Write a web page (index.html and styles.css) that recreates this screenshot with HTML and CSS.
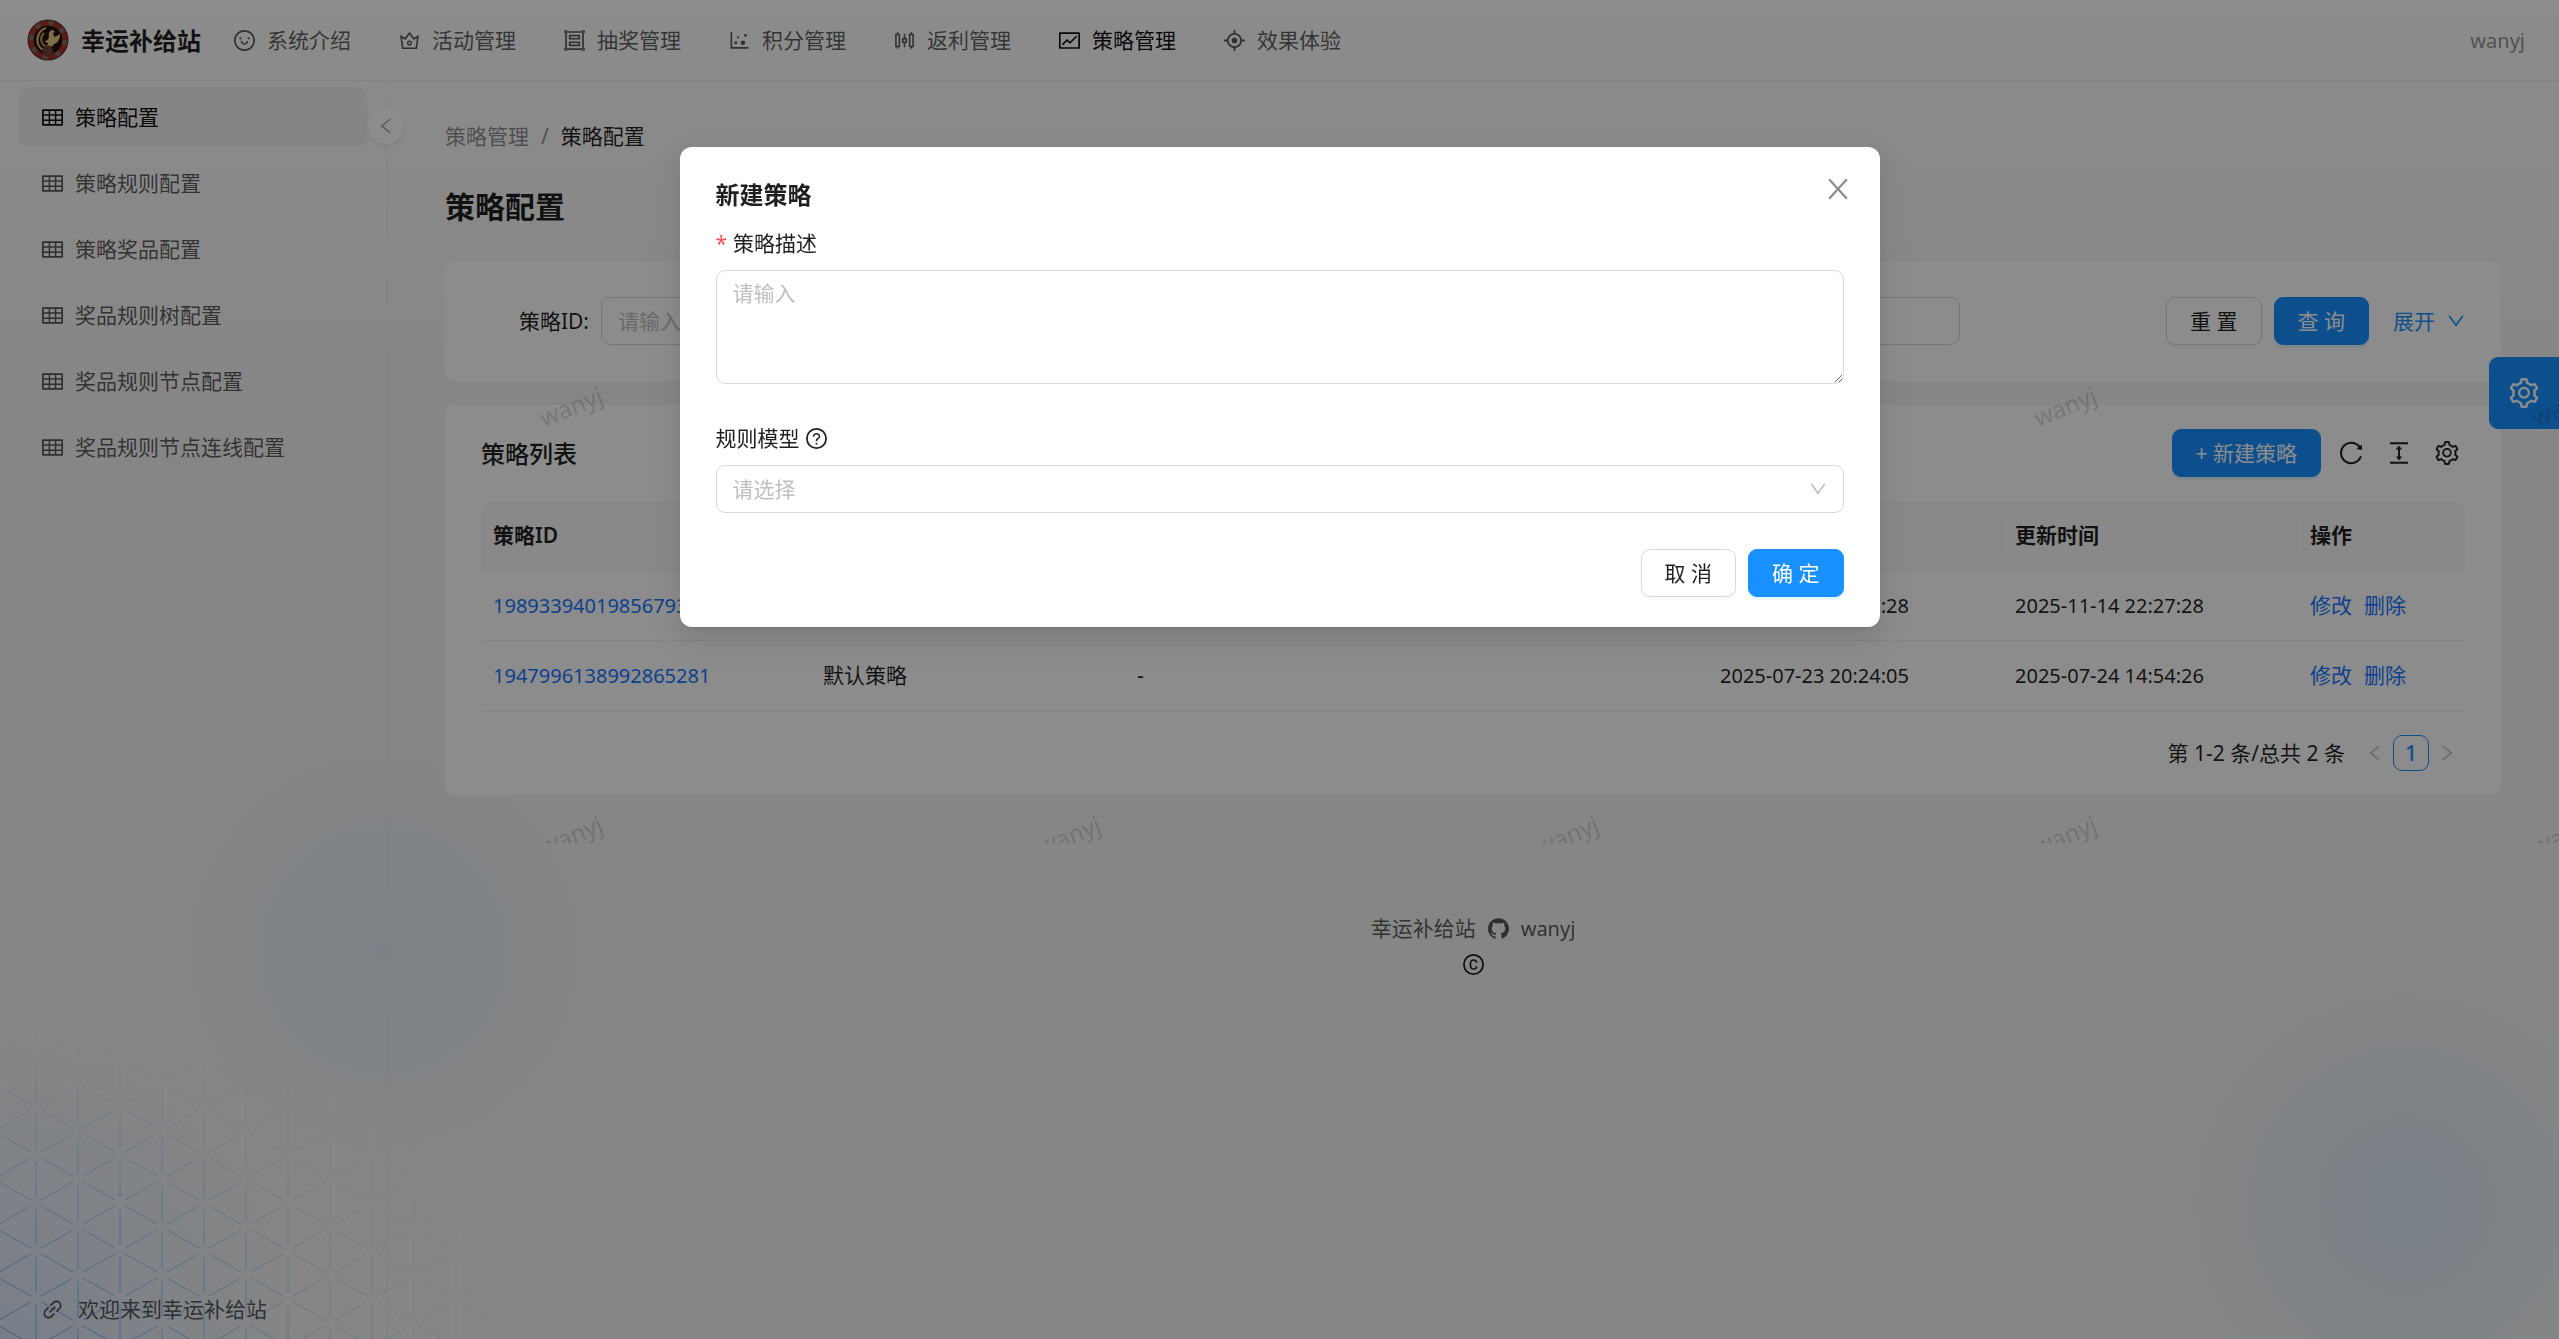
FILE: index.html
```html
<!DOCTYPE html>
<html lang="zh-CN">
<head>
    <meta charset="UTF-8">
    <meta name="viewport" content="width=device-width, initial-scale=1.0">
    <title>策略配置 - 幸运补给站</title>
    <link rel="stylesheet" href="styles.css">
</head>
<body>
    <!-- 图标库 -->
    <svg class="sprite" aria-hidden="true">
        <symbol id="i-smile" viewBox="64 64 896 896"><path d="M288 421a48 48 0 1096 0 48 48 0 10-96 0zm352 0a48 48 0 1096 0 48 48 0 10-96 0zM512 64C264.6 64 64 264.6 64 512s200.6 448 448 448 448-200.6 448-448S759.4 64 512 64zm263 711c-34.2 34.2-74 61-118.3 79.8C611 874.2 562.3 884 512 884c-50.3 0-99-9.8-144.8-29.2A370.4 370.4 0 01248.9 775c-34.2-34.2-61-74-79.8-118.3C149.8 611 140 562.3 140 512s9.8-99 29.2-144.8A370.4 370.4 0 01249 248.9c34.2-34.2 74-61 118.3-79.8C413 149.8 461.7 140 512 140c50.3 0 99 9.8 144.8 29.2A370.4 370.4 0 01775.1 249c34.2 34.2 61 74 79.8 118.3C874.2 413 884 461.7 884 512s-9.8 99-29.2 144.8A368.89 368.89 0 01775 775zM664 533h-48.1c-4.2 0-7.8 3.2-8.1 7.4C604 589.9 562.5 629 512 629s-92.1-39.1-95.8-88.6c-.3-4.2-3.9-7.4-8.1-7.4H360a8 8 0 00-8 8.4c4.4 84.3 74.5 151.6 160 151.6s155.6-67.3 160-151.6a8 8 0 00-8-8.4z"/></symbol>
        <symbol id="i-crown" viewBox="64 64 896 896"><path d="M899.6 276.5L705 396.4 518.4 147.5a8.06 8.06 0 00-12.9 0L319 396.4 124.3 276.5c-5.7-3.5-13.1 1.2-12.2 7.9L188.5 865c1.1 7.9 7.9 14 16 14h615.1c8 0 14.9-6 15.9-14l76.4-580.6c.8-6.7-6.5-11.4-12.3-7.9zm-126 534.1H250.3l-53.8-409.4 139.8 86.1L512 252.9l175.7 234.4 139.8-86.1-53.9 409.4zM512 509c-62.1 0-112.6 50.5-112.6 112.6S449.9 734.2 512 734.2s112.6-50.5 112.6-112.6S574.1 509 512 509zm0 160.9c-26.6 0-48.2-21.6-48.2-48.3 0-26.6 21.6-48.3 48.2-48.3s48.2 21.6 48.2 48.3c0 26.6-21.6 48.3-48.2 48.3z"/></symbol>
        <symbol id="i-group" viewBox="64 64 896 896"><path d="M912 820.1V203.9c28-9.9 48-36.6 48-67.9 0-39.8-32.2-72-72-72-31.3 0-58 20-67.9 48H203.9C194 84 167.3 64 136 64c-39.8 0-72 32.2-72 72 0 31.3 20 58 48 67.9v616.2C84 830 64 856.7 64 888c0 39.8 32.2 72 72 72 31.3 0 58-20 67.9-48h616.2c9.9 28 36.6 48 67.9 48 39.8 0 72-32.2 72-72 0-31.3-20-58-48-67.9zM888 112c13.3 0 24 10.7 24 24s-10.7 24-24 24-24-10.7-24-24 10.7-24 24-24zM136 912c-13.3 0-24-10.7-24-24s10.7-24 24-24 24 10.7 24 24-10.7 24-24 24zm0-752c-13.3 0-24-10.7-24-24s10.7-24 24-24 24 10.7 24 24-10.7 24-24 24zm704 680H184V184h656v656zm48 72c-13.3 0-24-10.7-24-24s10.7-24 24-24 24 10.7 24 24-10.7 24-24 24z"/><path d="M288 474h448c8.8 0 16-7.2 16-16V282c0-8.8-7.2-16-16-16H288c-8.8 0-16 7.2-16 16v176c0 8.8 7.2 16 16 16zm56-136h336v64H344v-64zm-56 420h448c8.8 0 16-7.2 16-16V566c0-8.8-7.2-16-16-16H288c-8.8 0-16 7.2-16 16v176c0 8.8 7.2 16 16 16zm56-136h336v64H344v-64z"/></symbol>
        <symbol id="i-dot" viewBox="64 64 896 896"><path d="M888 792H200V168c0-4.4-3.6-8-8-8h-56c-4.4 0-8 3.6-8 8v688c0 4.4 3.6 8 8 8h752c4.4 0 8-3.6 8-8v-56c0-4.4-3.6-8-8-8zM288 604a64 64 0 10128 0 64 64 0 10-128 0zm118-224a48 48 0 1096 0 48 48 0 10-96 0zm158 228a96 96 0 10192 0 96 96 0 10-192 0zm148-314a56 56 0 10112 0 56 56 0 10-112 0z"/></symbol>
        <symbol id="i-sliders" viewBox="64 64 896 896"><path d="M320 224h-66v-56c0-4.4-3.6-8-8-8h-52c-4.4 0-8 3.6-8 8v56h-66c-4.4 0-8 3.6-8 8v560c0 4.4 3.6 8 8 8h66v56c0 4.4 3.6 8 8 8h52c4.4 0 8-3.6 8-8v-56h66c4.4 0 8-3.6 8-8V232c0-4.4-3.6-8-8-8zm-60 508h-80V292h80v440zm644-508h-66v-56c0-4.4-3.6-8-8-8h-52c-4.4 0-8 3.6-8 8v56h-66c-4.4 0-8 3.6-8 8v560c0 4.4 3.6 8 8 8h66v56c0 4.4 3.6 8 8 8h52c4.4 0 8-3.6 8-8v-56h66c4.4 0 8-3.6 8-8V232c0-4.4-3.6-8-8-8zm-60 508h-80V292h80v440zM612 404h-66V232c0-4.4-3.6-8-8-8h-52c-4.4 0-8 3.6-8 8v172h-66c-4.4 0-8 3.6-8 8v200c0 4.4 3.6 8 8 8h66v172c0 4.4 3.6 8 8 8h52c4.4 0 8-3.6 8-8V620h66c4.4 0 8-3.6 8-8V412c0-4.4-3.6-8-8-8zm-60 145a3 3 0 01-3 3h-74a3 3 0 01-3-3v-74a3 3 0 013-3h74a3 3 0 013 3v74z"/></symbol>
        <symbol id="i-fund" viewBox="64 64 896 896"><path d="M926 164H94c-17.7 0-32 14.3-32 32v640c0 17.7 14.3 32 32 32h832c17.7 0 32-14.3 32-32V196c0-17.7-14.3-32-32-32zm-40 632H134V236h752v560zm-658.9-82.3c3.1 3.1 8.2 3.1 11.3 0l172.5-172.5 114.4 114.5c3.1 3.1 8.2 3.1 11.3 0l297-297.2c3.1-3.1 3.1-8.2 0-11.3l-36.8-36.8a8.03 8.03 0 00-11.3 0L531 565 416.6 450.5a8.03 8.03 0 00-11.3 0l-214.9 215a8.03 8.03 0 000 11.3l36.7 36.9z"/></symbol>
        <symbol id="i-aim" viewBox="64 64 896 896"><path d="M952 474H829.8C812.5 327.6 696.4 211.5 550 194.2V72c0-4.4-3.6-8-8-8h-60c-4.4 0-8 3.6-8 8v122.2C327.6 211.5 211.5 327.6 194.2 474H72c-4.4 0-8 3.6-8 8v60c0 4.4 3.6 8 8 8h122.2C211.5 696.4 327.6 812.5 474 829.8V952c0 4.4 3.6 8 8 8h60c4.4 0 8-3.6 8-8V829.8C696.4 812.5 812.5 696.4 829.8 550H952c4.4 0 8-3.6 8-8v-60c0-4.4-3.6-8-8-8zM512 756c-134.8 0-244-109.2-244-244s109.2-244 244-244 244 109.2 244 244-109.2 244-244 244z"/><circle cx="512" cy="512" r="120"/></symbol>
        <symbol id="i-table" viewBox="64 64 896 896"><path d="M928 160H96c-17.7 0-32 14.3-32 32v640c0 17.7 14.3 32 32 32h832c17.7 0 32-14.3 32-32V192c0-17.7-14.3-32-32-32zm-40 208H676V232h212v136zm0 224H676V432h212v160zM412 432h200v160H412V432zm200-64H412V232h200v136zm-476 64h212v160H136V432zm0-200h212v136H136V232zm0 424h212v136H136V656zm276 0h200v136H412V656zm476 136H676V656h212v136z"/></symbol>
        <symbol id="i-left" viewBox="64 64 896 896"><path d="M724 218.3V141c0-6.7-7.7-10.4-12.9-6.3L260.3 486.8a31.86 31.86 0 000 50.3l450.8 352.1c5.3 4.1 12.9.4 12.9-6.3v-77.3c0-4.9-2.3-9.6-6.1-12.6l-360-281 360-281.1c3.8-3 6.1-7.7 6.1-12.6z"/></symbol>
        <symbol id="i-down" viewBox="64 64 896 896"><path d="M884 256h-75c-5.1 0-9.9 2.5-12.9 6.6L512 654.2 227.9 262.6c-3-4.1-7.8-6.6-12.9-6.6h-75c-6.5 0-10.3 7.4-6.5 12.7l352.6 486.1c12.8 17.6 39 17.6 51.7 0l352.6-486.1c3.9-5.3.1-12.7-6.4-12.7z"/></symbol>
        <symbol id="i-close" viewBox="64 64 896 896"><path d="M180 150L844 874M844 150L180 874" fill="none" stroke="currentColor" stroke-width="84"/></symbol>
        <symbol id="i-reload" viewBox="64 64 896 896"><path d="M909.1 209.3l-56.4 44.1C775.8 155.1 656.2 92 521.9 92 290 92 102.3 279.5 102 511.5 101.7 743.7 289.8 932 521.9 932c181.3 0 335.8-115 394.6-276.1 1.5-4.2-.7-8.9-4.9-10.3l-56.7-19.5a8 8 0 00-10.1 4.8c-1.8 5-3.8 10-5.9 14.9-17.3 41-42.1 77.8-73.7 109.4A344.77 344.77 0 01655.9 829c-42.3 17.9-87.4 27-133.8 27-46.5 0-91.5-9.1-133.8-27A341.5 341.5 0 01279 755.2a342.16 342.16 0 01-73.7-109.4c-17.9-42.4-27-87.4-27-133.9s9.1-91.5 27-133.9c17.3-41 42.1-77.8 73.7-109.4 31.6-31.6 68.4-56.4 109.3-73.8 42.3-17.9 87.4-27 133.8-27 46.5 0 91.5 9.1 133.8 27a341.5 341.5 0 01109.3 73.8c9.9 9.9 19.2 20.4 27.8 31.4l-60.2 47a8 8 0 003 14.1l175.6 43c5 1.2 9.9-2.6 9.9-7.7l.8-180.9c-.1-6.6-7.8-10.3-13-6.2z"/></symbol>
        <symbol id="i-height" viewBox="64 64 896 896"><path d="M840 836H184c-4.4 0-8 3.6-8 8v60c0 4.4 3.6 8 8 8h656c4.4 0 8-3.6 8-8v-60c0-4.4-3.6-8-8-8zm0-724H184c-4.4 0-8 3.6-8 8v60c0 4.4 3.6 8 8 8h656c4.4 0 8-3.6 8-8v-60c0-4.4-3.6-8-8-8zM610.8 378c6 0 9.4-7 5.7-11.7L515.7 238.7a7.14 7.14 0 00-11.3 0L403.6 366.3a7.23 7.23 0 005.7 11.7H476v268h-62.8c-6 0-9.4 7-5.7 11.7l100.8 127.5c2.9 3.7 8.5 3.7 11.3 0l100.8-127.5c3.7-4.7.4-11.7-5.7-11.7H548V378h62.8z"/></symbol>
        <symbol id="i-setting" viewBox="64 64 896 896"><path d="M924.8 625.7l-65.5-56c3.1-19 4.7-38.4 4.7-57.8s-1.6-38.8-4.7-57.8l65.5-56a32.03 32.03 0 009.3-35.2l-.9-2.6a443.74 443.74 0 00-79.7-137.9l-1.8-2.1a32.12 32.12 0 00-35.1-9.5l-81.3 28.9c-30-24.6-63.5-44-99.7-57.6l-15.7-85a32.05 32.05 0 00-25.8-25.7l-2.7-.5c-52.1-9.4-106.9-9.4-159 0l-2.7.5a32.05 32.05 0 00-25.8 25.7l-15.8 85.4a351.86 351.86 0 00-99 57.4l-81.9-29.1a32 32 0 00-35.1 9.5l-1.8 2.1a446.02 446.02 0 00-79.7 137.9l-.9 2.6c-4.5 12.5-.8 26.5 9.3 35.2l66.3 56.6c-3.1 18.8-4.6 38-4.6 57.1 0 19.2 1.5 38.4 4.6 57.1L99 625.5a32.03 32.03 0 00-9.3 35.2l.9 2.6c18.1 50.4 44.9 96.9 79.7 137.9l1.8 2.1a32.12 32.12 0 0035.1 9.5l81.9-29.1c29.8 24.5 63.1 43.9 99 57.4l15.8 85.4a32.05 32.05 0 0025.8 25.7l2.7.5a449.4 449.4 0 00159 0l2.7-.5a32.05 32.05 0 0025.8-25.7l15.7-85a350 350 0 0099.7-57.6l81.3 28.9a32 32 0 0035.1-9.5l1.8-2.1c34.8-41.1 61.6-87.5 79.7-137.9l.9-2.6c4.5-12.3.8-26.3-9.3-35zM788.3 465.9c2.5 15.1 3.8 30.6 3.8 46.1s-1.3 31-3.8 46.1l-6.6 40.1 74.7 63.9a370.03 370.03 0 01-42.6 73.6L721 702.8l-31.4 25.8c-23.9 19.6-50.5 35-79.3 45.8l-38.1 14.3-17.9 97a377.5 377.5 0 01-85 0l-17.9-97.2-37.8-14.5c-28.5-10.8-55-26.2-78.7-45.7l-31.4-25.9-93.4 33.2c-17-22.9-31.2-47.6-42.6-73.6l75.5-64.5-6.5-40c-2.4-14.9-3.7-30.3-3.7-45.5 0-15.3 1.2-30.6 3.7-45.5l6.5-40-75.5-64.5c11.3-26.1 25.6-50.7 42.6-73.6l93.4 33.2 31.4-25.9c23.7-19.5 50.2-34.9 78.7-45.7l37.9-14.3 17.9-97.2c28.1-3.2 56.8-3.2 85 0l17.9 97 38.1 14.3c28.7 10.8 55.4 26.2 79.3 45.8l31.4 25.8 92.8-32.9c17 22.9 31.2 47.6 42.6 73.6L781.8 426l6.5 39.9zM512 326c-97.2 0-176 78.8-176 176s78.8 176 176 176 176-78.8 176-176-78.8-176-176-176zm79.2 255.2A111.6 111.6 0 01512 614c-29.9 0-58-11.7-79.2-32.8A111.6 111.6 0 01400 502c0-29.9 11.7-58 32.8-79.2C454 401.6 482.1 390 512 390c29.9 0 58 11.6 79.2 32.8A111.6 111.6 0 01624 502c0 29.9-11.7 58-32.8 79.2z"/></symbol>
        <symbol id="i-github" viewBox="64 64 896 896"><path d="M511.6 76.3C264.3 76.2 64 276.4 64 523.5 64 718.9 189.3 885 363.8 946c23.5 5.9 19.9-10.8 19.9-22.2v-77.5c-135.7 15.9-141.2-73.9-150.3-88.9C215 726 171.5 718 184.5 703c30.9-15.9 62.4 4 98.9 57.9 26.4 39.1 77.9 32.5 104 26 5.7-23.5 17.9-44.5 34.7-60.8-140.6-25.2-199.2-111-199.2-213 0-49.5 16.3-95 48.3-131.7-20.4-60.5 1.9-112.3 4.9-120 58.1-5.2 118.5 41.6 123.2 45.3 33-8.9 70.7-13.6 112.9-13.6 42.4 0 80.2 4.9 113.5 13.9 11.3-8.6 67.3-48.8 121.3-43.9 2.9 7.7 24.7 58.3 5.5 118 32.4 36.8 48.9 82.7 48.9 132.3 0 102.2-59 188.1-200 212.9a127.5 127.5 0 0138.1 91v112.5c.8 9 0 17.9 15 17.9 177.1-59.7 304.6-227 304.6-424.1 0-247.2-200.4-447.3-447.5-447.3z"/></symbol>
        <symbol id="i-question" viewBox="64 64 896 896"><circle cx="512" cy="512" r="410" fill="none" stroke="currentColor" stroke-width="76"/><path d="M623.6 316.7C593.6 290.4 554 276 512 276s-81.6 14.5-111.6 40.7C369.2 344 352 380.7 352 420v7.6c0 4.4 3.6 8 8 8h48c4.4 0 8-3.6 8-8V420c0-44.1 43.1-80 96-80s96 35.9 96 80c0 31.1-22 59.6-56.1 72.7-21.2 8.1-39.2 22.3-52.1 40.9-13.1 19-19.9 41.8-19.9 64.9V620c0 4.4 3.6 8 8 8h48c4.4 0 8-3.6 8-8v-22.7a48.3 48.3 0 0130.9-44.8c59-22.7 97.1-74.7 97.1-132.5.1-39.3-17.1-76-48.3-103.3zM472 732a40 40 0 1080 0 40 40 0 10-80 0z"/></symbol>
        <symbol id="i-copyright" viewBox="64 64 896 896"><circle cx="512" cy="512" r="410" fill="none" stroke="currentColor" stroke-width="76"/><path d="M517.6 351.3c53 0 89 33.8 93 83.4.3 4.2 3.8 7.4 8 7.4h56.7c2.6 0 4.7-2.1 4.7-4.7 0-86.7-68.4-147.4-162.7-147.4C407.4 290 344 364.2 344 486.8v52.3C344 660.8 407.4 734 517.3 734c94 0 162.7-58.8 162.7-141.4 0-2.6-2.1-4.7-4.7-4.7h-56.8c-4.2 0-7.6 3.2-8 7.3-4.2 46.1-40.1 77.8-93 77.8-65.3 0-102.1-47.9-102.1-133.6v-52.6c.1-87 37-135.5 102.2-135.5z"/></symbol>
        <symbol id="i-link" viewBox="64 64 896 896"><path d="M574 665.4a8.03 8.03 0 00-11.3 0L446.5 781.6c-53.8 53.8-144.6 59.5-204 0-59.5-59.5-53.8-150.2 0-204l116.2-116.2c3.1-3.1 3.1-8.2 0-11.3l-39.8-39.8a8.03 8.03 0 00-11.3 0L191.4 526.5c-84.6 84.6-84.6 221.5 0 306s221.5 84.6 306 0l116.2-116.2c3.1-3.1 3.1-8.2 0-11.3L574 665.4zm258.6-474c-84.6-84.6-221.5-84.6-306 0L410.3 307.6a8.03 8.03 0 000 11.3l39.7 39.7c3.1 3.1 8.2 3.1 11.3 0l116.2-116.2c53.8-53.8 144.6-59.5 204 0 59.5 59.5 53.8 150.2 0 204L665.3 562.6a8.03 8.03 0 000 11.3l39.8 39.8c3.1 3.1 8.2 3.1 11.3 0l116.2-116.2c84.5-84.6 84.5-221.5 0-306.1zM610.1 372.3a8.03 8.03 0 00-11.3 0L372.3 598.7a8.03 8.03 0 000 11.3l39.6 39.6c3.1 3.1 8.2 3.1 11.3 0l226.4-226.4c3.1-3.1 3.1-8.2 0-11.3l-39.5-39.6z"/></symbol>
    </svg>

    <div class="layout">
        <!-- 背景光斑和三角网格 -->
        <div class="layout-bg" aria-hidden="true">
            <svg class="bg-grid" viewBox="0 0 500 340">
                <defs>
                    <pattern id="tri" width="84" height="48" patternUnits="userSpaceOnUse" patternTransform="translate(15 12)">
                        <path d="M21 6V42M63 0V18M63 30V48M26 3L58 21M26 45L58 27M68 21L84 12M0 12L16 3M68 27L84 36M0 36L16 45" fill="none" stroke="#6ea8e6" stroke-width="1"/>
                    </pattern>
                    <radialGradient id="fade" gradientUnits="userSpaceOnUse" cx="0" cy="340" r="540" gradientTransform="translate(0 136) scale(1 .6)">
                        <stop offset="0" stop-color="#fff" stop-opacity=".9"/>
                        <stop offset="1" stop-color="#fff" stop-opacity="0"/>
                    </radialGradient>
                    <radialGradient id="glow" gradientUnits="userSpaceOnUse" cx="0" cy="340" r="320">
                        <stop offset="0" stop-color="#d4e2f8" stop-opacity=".8"/>
                        <stop offset="1" stop-color="#d4e2f8" stop-opacity="0"/>
                    </radialGradient>
                    <mask id="fade-mask"><rect width="500" height="340" fill="url(#fade)"/></mask>
                </defs>
                <rect width="500" height="340" fill="url(#glow)"/>
                <rect width="500" height="340" fill="url(#tri)" mask="url(#fade-mask)"/>
            </svg>
        </div>

        <header class="header">
            <a class="brand" href="#">
                <svg class="logo" viewBox="0 0 42 42" aria-hidden="true">
                    <circle cx="21" cy="21" r="20.5" fill="#4a2420"/>
                    <circle cx="21" cy="21" r="17" fill="none" stroke="#a8322a" stroke-width="5"/>
                    <circle cx="21" cy="21" r="17" fill="none" stroke="#86695f" stroke-width="5" stroke-dasharray="5 8.35"/>
                    <circle cx="21" cy="21" r="14" fill="#22110e"/>
                    <path d="M19 9C12 11 9 19 11 25C13 31 19 33 25 31" fill="none" stroke="#d9b56a" stroke-width="2"/>
                    <path d="M17 14C12 19 14 26 20 28" fill="none" stroke="#c79f55" stroke-width="2"/>
                    <path d="M17 22C20 22 22 20 22 17C21 14 23 11 26 11L28 13L26 14C26 16 27 17 28 18L33 15C33 20 31 24 27 25C25 29 22 28 19 27C22 26 22 24 17 22Z" fill="#e6cb86"/>
                    <circle cx="21" cy="32" r="5" fill="#8d5548" stroke="#4a2420"/>
                    <path d="M18 30H24V34H18ZM21 29V35" fill="none" stroke="#5a2c26" stroke-width="1"/>
                </svg>
                <span>幸运补给站</span>
            </a>
            <nav class="top-nav">
                <a href="#"><svg class="icon"><use href="#i-smile"/></svg>系统介绍</a>
                <a href="#"><svg class="icon"><use href="#i-crown"/></svg>活动管理</a>
                <a href="#"><svg class="icon"><use href="#i-group"/></svg>抽奖管理</a>
                <a href="#"><svg class="icon"><use href="#i-dot"/></svg>积分管理</a>
                <a href="#"><svg class="icon"><use href="#i-sliders"/></svg>返利管理</a>
                <a class="active" href="#"><svg class="icon"><use href="#i-fund"/></svg>策略管理</a>
                <a href="#"><svg class="icon"><use href="#i-aim"/></svg>效果体验</a>
            </nav>
            <span class="user latin">wanyj</span>
        </header>

        <div class="body">
            <aside class="sider">
                <nav class="side-nav">
                    <a class="active" href="#"><svg class="icon"><use href="#i-table"/></svg>策略配置</a>
                    <a href="#"><svg class="icon"><use href="#i-table"/></svg>策略规则配置</a>
                    <a href="#"><svg class="icon"><use href="#i-table"/></svg>策略奖品配置</a>
                    <a href="#"><svg class="icon"><use href="#i-table"/></svg>奖品规则树配置</a>
                    <a href="#"><svg class="icon"><use href="#i-table"/></svg>奖品规则节点配置</a>
                    <a href="#"><svg class="icon"><use href="#i-table"/></svg>奖品规则节点连线配置</a>
                </nav>
                <a class="welcome" href="#"><svg class="icon"><use href="#i-link"/></svg>欢迎来到幸运补给站</a>
                <button class="collapse" type="button" aria-label="收起菜单"><svg class="icon"><use href="#i-left"/></svg></button>
            </aside>

            <div class="content">
                <main class="page">
                    <nav class="breadcrumb">
                        <a href="#">策略管理</a><span>/</span><strong>策略配置</strong>
                    </nav>
                    <h1>策略配置</h1>

                    <form class="card search">
                        <div class="search-item">
                            <label for="q-id">策略ID:</label>
                            <input id="q-id" class="control" type="text" placeholder="请输入">
                        </div>
                        <div class="search-item">
                            <label for="q-desc">策略描述:</label>
                            <input id="q-desc" class="control" type="text" placeholder="请输入">
                        </div>
                        <div class="search-item">
                            <label for="q-model">规则模型:</label>
                            <input id="q-model" class="control" type="text" placeholder="请输入">
                        </div>
                        <div class="search-actions">
                            <button class="btn" type="reset">重 置</button>
                            <button class="btn primary" type="button">查 询</button>
                            <a class="expand" href="#">展开<svg class="icon small"><use href="#i-down"/></svg></a>
                        </div>
                    </form>

                    <section class="card list">
                        <div class="toolbar">
                            <h2>策略列表</h2>
                            <button class="btn primary" type="button">+ 新建策略</button>
                            <button class="tool" type="button" aria-label="刷新"><svg class="icon"><use href="#i-reload"/></svg></button>
                            <button class="tool" type="button" aria-label="密度"><svg class="icon"><use href="#i-height"/></svg></button>
                            <button class="tool" type="button" aria-label="列设置"><svg class="icon"><use href="#i-setting"/></svg></button>
                        </div>
                        <table class="table">
                            <thead>
                                <tr>
                                    <th class="col-id">策略ID</th>
                                    <th class="col-desc">策略描述</th>
                                    <th>规则模型</th>
                                    <th class="col-time">创建时间</th>
                                    <th class="col-time">更新时间</th>
                                    <th class="col-op">操作</th>
                                </tr>
                            </thead>
                            <tbody>
                                <tr>
                                    <td class="latin"><a href="#">1989339401985679361</a></td>
                                    <td>测试策略</td>
                                    <td>-</td>
                                    <td class="latin">2025-11-14 22:27:28</td>
                                    <td class="latin">2025-11-14 22:27:28</td>
                                    <td><div class="ops"><a href="#">修改</a><a href="#">删除</a></div></td>
                                </tr>
                                <tr>
                                    <td class="latin"><a href="#">1947996138992865281</a></td>
                                    <td>默认策略</td>
                                    <td>-</td>
                                    <td class="latin">2025-07-23 20:24:05</td>
                                    <td class="latin">2025-07-24 14:54:26</td>
                                    <td><div class="ops"><a href="#">修改</a><a href="#">删除</a></div></td>
                                </tr>
                            </tbody>
                        </table>
                        <div class="pagination">
                            <span class="total">第 1-2 条/总共 2 条</span>
                            <button class="pager" type="button" aria-label="上一页" disabled><svg class="icon small"><use href="#i-left"/></svg></button>
                            <button class="pager current" type="button">1</button>
                            <button class="pager next" type="button" aria-label="下一页" disabled><svg class="icon small"><use href="#i-left"/></svg></button>
                        </div>
                    </section>

                    <!-- 水印 -->
                    <svg class="watermark" aria-hidden="true">
                        <defs>
                            <pattern id="wm" width="498" height="429" patternUnits="userSpaceOnUse">
                                <text class="watermark-text" transform="translate(157 346) rotate(-22)">wanyj</text>
                            </pattern>
                        </defs>
                        <rect width="100%" height="100%" fill="url(#wm)"/>
                    </svg>
                </main>

                <footer class="footer">
                    <div class="footer-links">
                        <a href="#">幸运补给站</a>
                        <a href="#" aria-label="GitHub"><svg class="icon"><use href="#i-github"/></svg></a>
                        <a class="latin" href="#">wanyj</a>
                    </div>
                    <div class="copyright"><svg class="icon"><use href="#i-copyright"/></svg></div>
                </footer>
            </div>
        </div>

        <button class="float-setting" type="button" aria-label="主题设置"><svg class="icon"><use href="#i-setting"/></svg></button>
    </div>

    <!-- 新建策略弹窗 -->
    <div class="mask">
        <form class="modal" role="dialog" aria-labelledby="modal-title">
            <h2 id="modal-title">新建策略</h2>
            <button class="modal-close" type="button" aria-label="关闭"><svg class="icon"><use href="#i-close"/></svg></button>
            <div class="form-item">
                <label for="f-desc"><span class="required">*</span>策略描述</label>
                <textarea id="f-desc" class="control" placeholder="请输入"></textarea>
            </div>
            <div class="form-item">
                <label for="f-model">规则模型<svg class="icon"><use href="#i-question"/></svg></label>
                <div class="select">
                    <select id="f-model" class="control">
                        <option value="">请选择</option>
                    </select>
                    <svg class="icon"><use href="#i-down"/></svg>
                </div>
            </div>
            <div class="modal-footer">
                <button class="btn" type="button">取 消</button>
                <button class="btn primary" type="button">确 定</button>
            </div>
        </form>
    </div>
</body>
</html>
```

FILE: styles.css
```css
* {
    box-sizing: border-box;
}
body {
    margin: 0;
    font-family: "Noto Sans", "Noto Sans CJK SC", sans-serif;
    font-size: 21px;
    line-height: 33px;
    color: rgba(0,0,0,0.88);
    background: #f5f5f5;
}
a {
    color: inherit;
    text-decoration: none;
}
h1, h2 {
    margin: 0;
}
button, input, textarea, select {
    font: inherit;
    color: inherit;
}
.sprite {
    display: none;
}
.icon {
    display: block;
    flex: none;
    width: 21px;
    height: 21px;
    fill: currentColor;
}
.icon.small {
    width: 18px;
    height: 18px;
}
.latin {
    font-size: 20px;
}

/* 整体布局 */
.layout {
    position: relative;
    display: flex;
    flex-direction: column;
    min-height: 100vh;
    background: linear-gradient(#fff, #f5f5f5 28%);
    overflow: hidden;
}
.layout-bg {
    position: absolute;
    inset: 0;
    background:
        radial-gradient(circle 240px at 15% 71%, rgba(216,232,248,0.6), rgba(216,232,248,0)),
        radial-gradient(circle 240px at 94% 90%, rgba(210,228,248,0.7), rgba(210,228,248,0));
}
.bg-grid {
    position: absolute;
    left: 0;
    bottom: 0;
    width: 500px;
    height: 340px;
}
.header {
    position: relative;
    display: flex;
    align-items: center;
    height: 81px;
    padding: 0 34px 0 27px;
    border-bottom: 1px solid rgba(5,5,5,0.06);
}
.brand {
    display: flex;
    align-items: center;
    gap: 12px;
    font-size: 24px;
    font-weight: 600;
}
.logo {
    width: 42px;
    height: 42px;
}
.top-nav {
    display: flex;
    flex: 1;
    gap: 48px;
    margin-left: 33px;
    color: rgba(0,0,0,0.65);
}
.top-nav a, .side-nav a, .welcome {
    display: flex;
    align-items: center;
    gap: 12px;
}
.top-nav .active {
    color: rgba(0,0,0,0.95);
}
.user {
    color: rgba(0,0,0,0.45);
}
.body {
    position: relative;
    display: flex;
    flex: 1;
}
.sider {
    position: relative;
    display: flex;
    flex-direction: column;
    flex: none;
    width: 387px;
    padding: 6px 19px 13px 18px;
    border-right: 1px solid rgba(5,5,5,0.06);
    color: rgba(0,0,0,0.65);
}
.side-nav {
    display: flex;
    flex-direction: column;
    flex: 1;
    gap: 6px;
}
.side-nav a {
    height: 60px;
    padding: 0 24px;
    border-radius: 9px;
}
.side-nav .active {
    color: rgba(0,0,0,0.95);
    background: rgba(0,0,0,0.04);
}
.welcome {
    gap: 15px;
    padding-left: 24px;
}
.collapse {
    position: absolute;
    top: 27px;
    right: -18px;
    display: grid;
    place-items: center;
    width: 36px;
    height: 36px;
    padding: 0;
    border: 0;
    border-radius: 50%;
    background: #fff;
    color: rgba(0,0,0,0.35);
    box-shadow: 0 2px 8px -2px rgba(0,0,0,0.1), 0 0 1px rgba(0,0,0,0.1);
}
.collapse .icon {
    width: 18px;
    height: 18px;
}
.content {
    flex: 1;
    min-width: 0;
}
.page {
    position: relative;
    padding: 39px 58px 48px;
}

/* 面包屑和标题 */
.breadcrumb {
    display: flex;
    gap: 12px;
    color: rgba(0,0,0,0.45);
}
.breadcrumb strong {
    font-weight: 400;
    color: rgba(0,0,0,0.88);
}
h1 {
    margin: 30px 0;
    font-size: 30px;
    line-height: 48px;
    font-weight: 600;
}

/* 卡片 */
.card {
    padding: 36px;
    border-radius: 9px;
    background: #fff;
}
.control {
    width: 100%;
    height: 48px;
    padding: 0 16px;
    border: 1px solid #d9d9d9;
    border-radius: 9px;
    background: #fff;
}
.control::placeholder {
    color: #bfbfbf;
    opacity: 1;
}
.btn {
    height: 48px;
    padding: 0 23px;
    border: 1px solid #d9d9d9;
    border-radius: 9px;
    background: #fff;
    white-space: nowrap;
    box-shadow: 0 3px 0 rgba(0,0,0,0.02);
}
.btn.primary {
    border-color: #1890ff;
    background: #1890ff;
    color: #fff;
    box-shadow: 0 3px 0 rgba(5,175,255,0.1);
}
.search {
    display: grid;
    grid-template-columns: repeat(4, 1fr);
    gap: 36px;
    margin-bottom: 24px;
}
.search-item {
    display: flex;
    align-items: center;
    gap: 12px;
}
.search-item label {
    flex: none;
    width: 108px;
    text-align: right;
    white-space: nowrap;
}
.search-actions {
    display: flex;
    align-items: center;
    justify-content: flex-end;
    gap: 12px;
}
.expand {
    display: flex;
    align-items: center;
    gap: 12px;
    margin-left: 12px;
    color: #1890ff;
}

/* 列表 */
.list {
    padding: 24px 36px;
}
.toolbar {
    display: flex;
    align-items: center;
    gap: 24px;
    padding-right: 6px;
    margin-bottom: 24px;
}
.toolbar h2 {
    flex: 1;
    font-size: 24px;
    font-weight: 500;
}
.toolbar .primary {
    margin-right: -6px;
}
.tool {
    padding: 0;
    border: 0;
    background: none;
}
.tool .icon {
    width: 24px;
    height: 24px;
}
.table {
    width: 100%;
    table-layout: fixed;
    border-collapse: separate;
    border-spacing: 0;
}
.table th, .table td {
    height: 70px;
    padding: 0 12px;
    border-bottom: 1px solid #f0f0f0;
    text-align: left;
}
.table th {
    font-weight: 600;
    background: linear-gradient(#f0f0f0, #f0f0f0) no-repeat right center / 1px 33px #fafafa;
}
.table th:first-child {
    border-top-left-radius: 12px;
}
.table th:last-child {
    border-top-right-radius: 12px;
    background: #fafafa;
}
.table a {
    color: #1677ff;
}
.col-id {
    width: 330px;
}
.col-desc {
    width: 314px;
}
.col-time {
    width: 295px;
}
.col-op {
    width: 167px;
}
.ops {
    display: flex;
    gap: 12px;
}
.pagination {
    display: flex;
    justify-content: flex-end;
    align-items: center;
    margin-top: 24px;
}
.total {
    margin-right: 12px;
}
.pager {
    display: grid;
    place-items: center;
    width: 36px;
    height: 36px;
    padding: 0;
    border: 0;
    border-radius: 9px;
    background: none;
    color: rgba(0,0,0,0.25);
}
.pager.current {
    border: 1px solid #1890ff;
    font-weight: 500;
    color: #1890ff;
}
.pager.next .icon {
    transform: rotate(180deg);
}

.watermark {
    position: absolute;
    z-index: 2;
    inset: 0;
    width: 100%;
    height: 100%;
    pointer-events: none;
}
.watermark-text {
    font-size: 24px;
    fill: rgba(0,0,0,0.15);
}
.footer {
    display: flex;
    flex-direction: column;
    align-items: center;
    gap: 3px;
    padding-top: 69px;
}
.footer-links {
    display: flex;
    align-items: center;
    gap: 12px;
    color: rgba(0,0,0,0.65);
}
.copyright {
    padding: 6px;
}
.float-setting {
    position: absolute;
    top: 357px;
    right: 0;
    display: grid;
    place-items: center;
    width: 70px;
    height: 72px;
    padding: 0;
    border: 0;
    border-radius: 9px 0 0 9px;
    background: #1890ff;
    color: #fff;
}
.float-setting .icon {
    width: 30px;
    height: 30px;
}

/* 弹窗 */
.mask {
    position: fixed;
    z-index: 10;
    inset: 0;
    display: flex;
    justify-content: center;
    align-items: flex-start;
    padding-top: 147px;
    background: rgba(0,0,0,0.45);
}
.modal {
    position: relative;
    width: 1200px;
    max-width: 100%;
    padding: 30px 36px;
    border-radius: 12px;
    background: #fff;
    box-shadow: 0 9px 24px rgba(0,0,0,0.08), 0 5px 9px -6px rgba(0,0,0,0.12), 0 14px 42px 12px rgba(0,0,0,0.05);
}
.modal h2 {
    margin-bottom: 12px;
    font-size: 24px;
    line-height: 36px;
    font-weight: 600;
}
.modal-close {
    position: absolute;
    top: 30px;
    right: 30px;
    padding: 0;
    border: 0;
    background: none;
    color: rgba(0,0,0,0.45);
}
.modal-close .icon {
    width: 24px;
    height: 24px;
}
.form-item {
    margin-bottom: 36px;
}
.form-item label {
    display: flex;
    align-items: center;
    gap: 6px;
    margin-bottom: 9px;
    line-height: 36px;
}
.required {
    color: #ff4d4f;
}
textarea.control {
    display: block;
    height: 114px;
    padding: 6px 16px;
    resize: vertical;
}
.select {
    position: relative;
}
.select .control {
    display: block;
    appearance: none;
    color: #bfbfbf;
}
.select .icon {
    position: absolute;
    top: 15px;
    right: 17px;
    width: 18px;
    height: 18px;
    color: #bfbfbf;
    pointer-events: none;
}
.modal-footer {
    display: flex;
    justify-content: flex-end;
    gap: 12px;
}
```
